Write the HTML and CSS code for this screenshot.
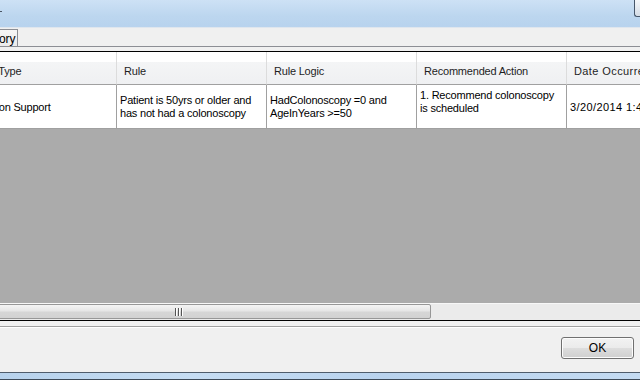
FILE: index.html
```html
<!DOCTYPE html>
<html>
<head>
<meta charset="utf-8">
<link rel="stylesheet" href="styles.css">
</head>
<body>
<div class="window">
  <div class="titlebar">
    <span class="title-mark"></span>
    <span class="close-edge"></span>
  </div>
  <div class="tabs">
    <div class="tab">ory</div>
    <div class="tab-rest"></div>
  </div>
  <div class="grid-frame">
    <div class="grid-view">
      <div class="grid">
        <div class="hcell">Alert Type</div>
        <div class="hcell">Rule</div>
        <div class="hcell">Rule Logic</div>
        <div class="hcell">Recommended Action</div>
        <div class="hcell wide">Date Occurred</div>
        <div class="dcell">Decision Support</div>
        <div class="dcell">Patient is 50yrs or older and<br>has not had a colonoscopy</div>
        <div class="dcell">HadColonoscopy =0 and<br>AgeInYears &gt;=50</div>
        <div class="dcell top">1. Recommend colonoscopy<br>is scheduled</div>
        <div class="dcell wide">3/20/2014 1:45 PM</div>
      </div>
      <div class="empty"></div>
    </div>
    <div class="hscroll">
      <div class="thumb"><span class="grip"><i></i><i></i><i></i></span></div>
    </div>
  </div>
  <div class="footer">
    <div class="footer-inner">
      <button class="ok">OK</button>
    </div>
  </div>
  <div class="bottom-edge"></div>
</div>
</body>
</html>
```
FILE: styles.css
```css
* { box-sizing: border-box; }
html, body { margin: 0; padding: 0; }
body {
  width: 640px;
  height: 380px;
  overflow: hidden;
  background: #f0f0f0;
  font-family: "Liberation Sans", Arial, sans-serif;
  font-size: 11px;
  letter-spacing: -0.2px;
  color: #000;
}
.window {
  display: flex;
  flex-direction: column;
  width: 640px;
  height: 380px;
}
.titlebar {
  height: 28px;
  flex: none;
  display: flex;
  align-items: flex-start;
  background: linear-gradient(#cde1f5, #bcd6ef 60%, #b8d3ee);
  border-bottom: 1px solid #dfe6ee;
}
.title-mark {
  width: 2px;
  height: 1px;
  margin-top: 11px;
  background: #4a5563;
}
.close-edge {
  margin-left: auto;
  width: 6px;
  height: 17px;
  border-left: 1px solid #46566a;
  border-bottom: 1px solid #46566a;
  border-bottom-left-radius: 3px;
  background: linear-gradient(#f4f7fa, #d4dce6);
}
.tabs {
  height: 23px;
  flex: none;
  display: flex;
  align-items: flex-start;
  padding-top: 1px;
}
.tab {
  width: 18px;
  height: 18px;
  border: 1px solid #8c8e94;
  border-left: none;
  background: linear-gradient(#f6f6f6, #ebebeb);
  padding-top: 2px;
  font-size: 12px;
  letter-spacing: -0.1px;
  color: #000;
  overflow: hidden;
  text-indent: -1px;
}
.tab-rest {
  flex: 1;
  height: 18px;
  border-bottom: 1px solid #8c8e94;
}
.grid-frame {
  flex: none;
  border-top: 1px solid #000;
  border-bottom: 1px solid #000;
  display: flex;
  flex-direction: column;
}
.grid-view {
  overflow: hidden;
  display: flex;
  flex-direction: column;
}
.grid {
  display: grid;
  grid-template-columns: repeat(5, 150px);
  grid-template-rows: 33px 44px;
  margin-left: -33px;
  width: 750px;
  background: #fff;
}
.hcell {
  display: flex;
  align-items: center;
  padding: 5px 0 0 7px;
  white-space: nowrap;
  overflow: hidden;
  color: #1e1e1e;
  background: linear-gradient(#ffffff 0, #ffffff 30%, #f4f5f6 30%, #eff0f2 100%);
  border-right: 1px solid #dcdcdc;
  border-bottom: 1px solid #a0a0a0;
}
.dcell {
  display: flex;
  align-items: center;
  padding: 1px 0 0 3px;
  line-height: 13px;
  white-space: nowrap;
  overflow: hidden;
  border-right: 1px solid #a0a0a0;
  border-bottom: 1px solid #a0a0a0;
}
.dcell.top {
  align-items: flex-start;
  padding-top: 4px;
}
.wide {
  letter-spacing: 0.4px;
}
.empty {
  height: 174px;
  background: #ababab;
}
.hscroll {
  height: 17px;
  background: #ebebeb;
  border-top: 1px solid #f7f7f7;
  display: flex;
}
.thumb {
  width: 503px;
  margin-left: -72px;
  height: 15px;
  border: 1px solid #979797;
  border-radius: 2px;
  background: linear-gradient(#f4f4f4, #e6e6e6 45%, #d6d6d6 55%, #d2d2d2);
  display: flex;
  justify-content: center;
  align-items: center;
}
.grip {
  display: flex;
  gap: 1px;
  margin-left: -2px;
}
.grip i {
  display: block;
  width: 2px;
  height: 8px;
  border-left: 1px solid #555;
  border-right: 1px solid #fff;
}
.footer {
  flex: none;
  padding-top: 5px;
}
.footer-inner {
  height: 46px;
  border-top: 1px solid #a0a0a0;
  box-shadow: inset 0 1px 0 #fff;
  display: flex;
  justify-content: flex-end;
  align-items: flex-start;
  padding: 10px 6px 0 0;
}
.ok {
  width: 73px;
  height: 22px;
  border: 1px solid #707070;
  border-radius: 3px;
  background: linear-gradient(#f2f2f2, #ebebeb 48%, #dddddd 52%, #cfcfcf);
  font-family: "Liberation Sans", Arial, sans-serif;
  font-size: 12px;
  color: #000;
  padding: 0;
  box-shadow: inset 0 0 0 1px #fcfcfc;
}
.bottom-edge {
  flex: 1;
  border-top: 1px solid #4f5d6c;
  border-bottom: 1px solid #3d4a58;
  background: linear-gradient(90deg, #b7d2ec, #c6ddf3 30%, #b9d3ee 60%, #c4dbf2);
}
```
